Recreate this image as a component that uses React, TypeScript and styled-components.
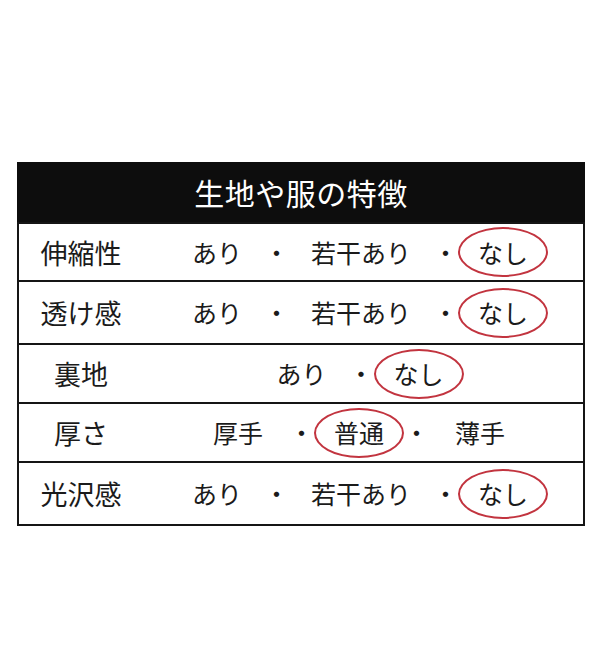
import React from "react";
import styled, { createGlobalStyle } from "styled-components";

const Global = createGlobalStyle`
  html, body { margin: 0; padding: 0; background: #ffffff; }
  body { font-family: "Noto Sans CJK JP", "Noto Sans", sans-serif; color: #1b1b1b; }
`;

const Page = styled.div`
  width: 600px;
  height: 662px;
  padding: 162px 15px 0 17px;
  box-sizing: border-box;
`;

const Table = styled.div`
  width: 568px;
  border: 2px solid #151515;
  border-top: none;
  box-sizing: border-box;
  display: flex;
  flex-direction: column;
`;

const Header = styled.div`
  height: 60px;
  margin: 0 -2px;
  background: #0d0d0d;
  color: #ffffff;
  font-size: 30px;
  line-height: 1;
  display: flex;
  align-items: center;
  justify-content: center;
  letter-spacing: 0.5px;
`;

const Row = styled.div<{ $h: number }>`
  height: ${(p) => p.$h}px;
  box-sizing: border-box;
  border-top: 2px solid #151515;
  display: grid;
  grid-template-columns: 124px 1fr;
  align-items: center;
`;

const Label = styled.div`
  font-size: 27px;
  line-height: 1;
  text-align: center;
`;

const Options = styled.div<{ $pad: number }>`
  display: flex;
  align-items: center;
  justify-content: center;
  font-size: 25px;
  line-height: 1;
  padding-right: 8px;
  --opt-pad: ${(p) => p.$pad}px;
`;

const Option = styled.span<{ $circled?: boolean }>`
  display: inline-flex;
  align-items: center;
  justify-content: center;
  height: 50px;
  padding: 0 ${(p) => (p.$circled ? "18px" : "var(--opt-pad)")};
  box-sizing: border-box;
  border: 2px solid ${(p) => (p.$circled ? "#c2343f" : "transparent")};
  border-radius: 50%;
`;

const Dot = styled.span`
  display: inline-block;
  width: 25px;
  text-align: center;
`;

type RowData = { label: string; options: string[]; selected: number; h: number; pad: number };

const rows: RowData[] = [
  { label: "伸縮性", options: ["あり", "若干あり", "なし"], selected: 2, h: 58, pad: 20 },
  { label: "透け感", options: ["あり", "若干あり", "なし"], selected: 2, h: 63, pad: 20 },
  { label: "裏地", options: ["あり", "なし"], selected: 1, h: 59, pad: 20 },
  { label: "厚さ", options: ["厚手", "普通", "薄手"], selected: 1, h: 59, pad: 24 },
  { label: "光沢感", options: ["あり", "若干あり", "なし"], selected: 2, h: 63, pad: 20 },
];

export default function App() {
  return (
    <>
      <Global />
      <Page>
        <Table>
          <Header>生地や服の特徴</Header>
          {rows.map((r) => (
            <Row key={r.label} $h={r.h}>
              <Label>{r.label}</Label>
              <Options $pad={r.pad}>
                {r.options.map((o, i) => (
                  <React.Fragment key={o}>
                    {i > 0 && <Dot>・</Dot>}
                    <Option $circled={i === r.selected}>{o}</Option>
                  </React.Fragment>
                ))}
              </Options>
            </Row>
          ))}
        </Table>
      </Page>
    </>
  );
}
